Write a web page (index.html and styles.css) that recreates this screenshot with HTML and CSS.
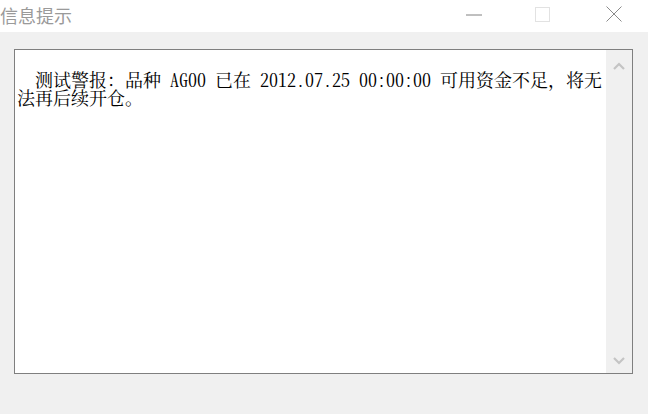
FILE: index.html
```html
<!DOCTYPE html>
<html lang="zh">
<head>
<meta charset="utf-8">
<title>信息提示</title>
<link rel="stylesheet" href="styles.css">
</head>
<body>
<div class="window">
  <div class="titlebar">
    <div class="title">信息提示</div>
    <div class="controls">
      <div class="btn btn-min"><svg width="16" height="2" viewBox="0 0 16 2"><line x1="0" y1="1" x2="16" y2="1" stroke="#808080" stroke-width="1"/></svg></div>
      <div class="btn btn-max"><svg width="16" height="16" viewBox="0 0 16 16"><rect x="0.5" y="0.5" width="14" height="14" fill="none" stroke="#e2e2e2" stroke-width="1"/></svg></div>
      <div class="btn btn-close"><svg width="16" height="16" viewBox="0 0 16 16"><line x1="0.5" y1="0.5" x2="15.5" y2="15.5" stroke="#8a8a8a" stroke-width="1"/><line x1="15.5" y1="0.5" x2="0.5" y2="15.5" stroke="#8a8a8a" stroke-width="1"/></svg></div>
    </div>
  </div>
  <div class="content">
    <div class="textbox">
      <div class="text">
        <div class="line first">测试警报：品种<span class="en"> AG00 </span>已在<span class="en"> 2012.07.25 00:00:00 </span>可用资金不足，将无</div>
        <div class="line">法再后续开仓。</div>
      </div>
      <div class="scrollbar">
        <svg width="12" height="8" viewBox="0 0 12 8"><polyline points="1,7 6,2 11,7" fill="none" stroke="#c4c4c4" stroke-width="2.2"/></svg>
        <svg width="12" height="8" viewBox="0 0 12 8"><polyline points="1,1 6,6 11,1" fill="none" stroke="#c4c4c4" stroke-width="2.2"/></svg>
      </div>
    </div>
  </div>
</div>
</body>
</html>
```
FILE: styles.css
```css
html, body {
  margin: 0;
  padding: 0;
}
body {
  width: 648px;
  height: 414px;
  overflow: hidden;
  background: #f0f0f0;
  font-family: "Noto Sans CJK SC", "Noto Sans", sans-serif;
}
.window {
  display: flex;
  flex-direction: column;
  width: 648px;
  height: 414px;
}
.titlebar {
  height: 32px;
  background: #ffffff;
  display: flex;
  justify-content: space-between;
  align-items: stretch;
}
.title {
  font-size: 18px;
  line-height: 30px;
  color: #9a9a9a;
}
.controls {
  display: flex;
}
.btn {
  width: 69px;
  display: flex;
  justify-content: center;
  align-items: flex-start;
  box-sizing: border-box;
}
.btn-min {
  padding-top: 14px;
}
.btn-max {
  padding-top: 7px;
}
.btn-close {
  margin-left: 2px;
  padding-top: 6px;
}
.content {
  flex: 1;
  padding: 17px 15px 0 14px;
}
.textbox {
  height: 325px;
  box-sizing: border-box;
  border: 1px solid #7f7f7f;
  background: #ffffff;
  display: flex;
}
.text {
  flex: 1;
  padding: 20px 3px 0 2px;
  font-family: "Noto Serif CJK SC", "Noto Sans CJK SC", serif;
  font-size: 18px;
  line-height: 18px;
  color: #000000;
}
.line {
  white-space: nowrap;
}
.line.first {
  padding-left: 18px;
}
.en {
  font-feature-settings: "hwid" 1;
  white-space: pre;
}
.scrollbar {
  width: 26px;
  background: #f0f0f0;
  display: flex;
  flex-direction: column;
  justify-content: space-between;
  align-items: center;
  padding: 12px 0 8px 0;
  box-sizing: border-box;
}
```
